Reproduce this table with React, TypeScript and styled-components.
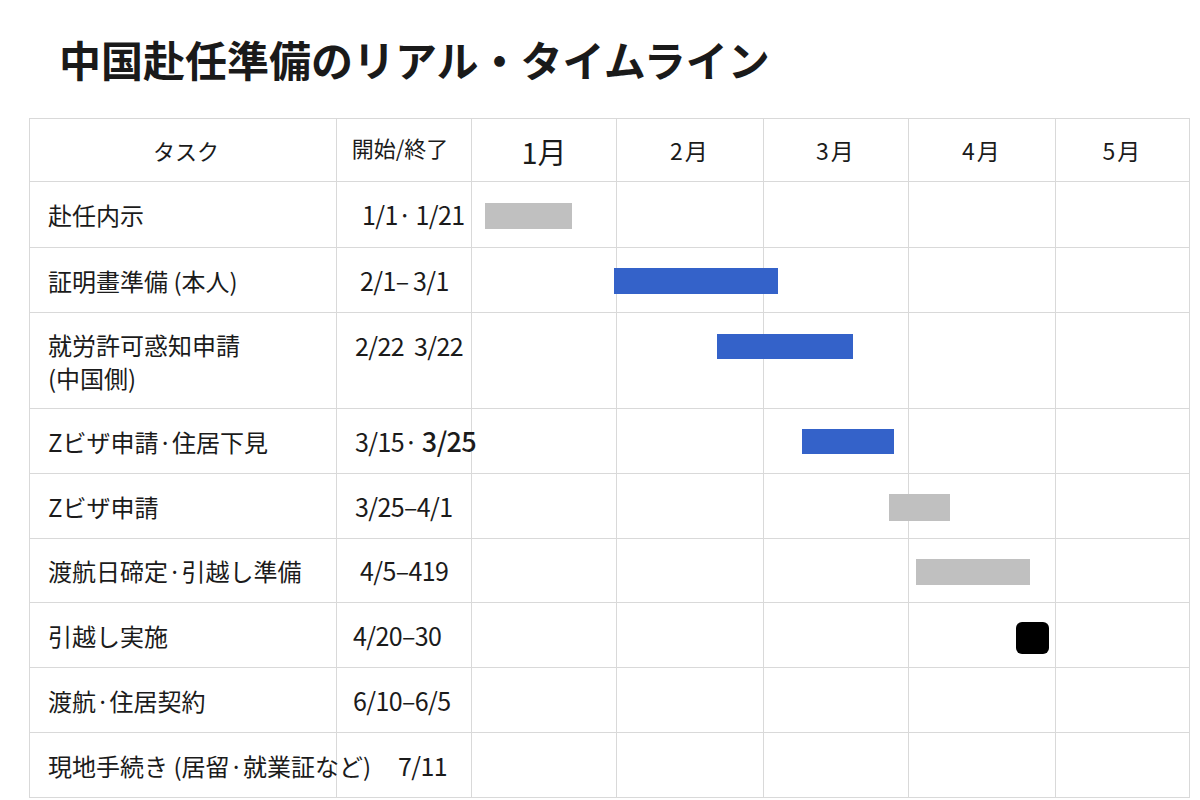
import { createGlobalStyle } from 'styled-components';
import styled from 'styled-components';

type BarType = {
  left: number;
  top: number;
  width: number;
  height: number;
  color: string;
  radius?: number;
};

type TaskType = {
  name: string[];
  date: string;
  dateTail?: string;
  height: number;
  dateTop?: boolean;
  dateIndent?: number;
  bar?: BarType;
};

const BLUE = '#3462c9';
const GRAY = '#c0c0c0';

const months = ['1月', '2月', '3月', '4月', '5月'];

const tasks: TaskType[] = [
  {
    name: ['赴任内示'],
    date: '1/1·\u20091/21',
    height: 66,
    dateIndent: 25,
    bar: { left: 13, top: 21, width: 87, height: 26, color: GRAY },
  },
  {
    name: ['証明畫準備 (本人)'],
    date: '2/1–\u20093/1',
    height: 65,
    dateIndent: 23,
    bar: { left: 142, top: 20, width: 164, height: 26, color: BLUE },
  },
  {
    name: ['就労許可惑知申請', '(中国側)'],
    date: '2/22\u00a0 3/22',
    height: 96,
    dateTop: true,
    bar: { left: 245, top: 21, width: 136, height: 25, color: BLUE },
  },
  {
    name: ['Zビザ申請·住居下見'],
    date: '3/15·\u2009',
    dateTail: '3/25',
    height: 65,
    bar: { left: 330, top: 20, width: 92, height: 25, color: BLUE },
  },
  {
    name: ['Zビザ申請'],
    date: '3/25–4/1',
    height: 65,
    bar: { left: 417, top: 20, width: 61, height: 27, color: GRAY },
  },
  {
    name: ['渡航日碲定·引越し準備'],
    date: '4/5–419',
    height: 64,
    dateIndent: 23,
    bar: { left: 444, top: 20, width: 114, height: 26, color: GRAY },
  },
  {
    name: ['引越し実施'],
    date: '4/20–30',
    height: 65,
    dateIndent: 16,
    bar: { left: 544, top: 19, width: 33, height: 32, color: '#000', radius: 6 },
  },
  {
    name: ['渡航·住居契約'],
    date: '6/10–6/5',
    height: 65,
    dateIndent: 16,
  },
  {
    name: ['現地手続き (居留·就業証など)'],
    date: '7/11',
    height: 65,
    dateIndent: 61,
  },
];

function App() {
  return (
    <>
      <GlobalStyle />
      <Page>
        <Title>中国赴任準備のリアル・タイムライン</Title>
        <Chart>
          <Row $height={63}>
            <HeadCell $col={1}>タスク</HeadCell>
            <HeadCell $col={2} $raise>
              開始/終了
            </HeadCell>
            {months.map((m, i) => (
              <MonthHead key={m} $col={i + 3} $big={i === 0}>
                {m}
              </MonthHead>
            ))}
          </Row>
          {tasks.map((t, index) => (
            <Row key={index} $height={t.height}>
              <TaskCell $col={1}>
                {t.name.map((line) => (
                  <span key={line}>{line}</span>
                ))}
              </TaskCell>
              <DateCell $col={2} $top={t.dateTop} $indent={t.dateIndent ?? 18}>
                <span>
                  {t.date}
                  {t.dateTail && <BigDate>{t.dateTail}</BigDate>}
                </span>
              </DateCell>
              {months.map((m, i) => (
                <MonthCell key={m} $col={i + 3} />
              ))}
              {t.bar && (
                <Bar
                  $color={t.bar.color}
                  $radius={t.bar.radius ?? 0}
                  style={{
                    marginLeft: t.bar.left,
                    marginTop: t.bar.top,
                    width: t.bar.width,
                    height: t.bar.height,
                  }}
                />
              )}
            </Row>
          ))}
        </Chart>
      </Page>
    </>
  );
}

const GlobalStyle = createGlobalStyle`
  html, body {
    margin: 0;
    padding: 0;
    background: #fff;
  }
  body {
    font-family: "Noto Sans CJK JP", "Noto Sans", sans-serif;
    color: #1b1b1b;
  }
`;

const Page = styled.div`
  width: 1200px;
  height: 800px;
  overflow: hidden;
  padding: 0 0 0 29px;
  box-sizing: border-box;
`;

const Title = styled.h1`
  margin: 0;
  padding: 30px 0 0 30px;
  height: 118px;
  box-sizing: border-box;
  font-size: 42px;
  line-height: 58px;
  font-weight: 700;
  color: #1a1a1a;
`;

const Chart = styled.div`
  width: 1161px;
  border-top: 1px solid #d9d9d9;
  border-left: 1px solid #d9d9d9;
  box-sizing: border-box;
`;

const Row = styled.div<{ $height: number }>`
  display: grid;
  grid-template-columns: 307px 135px 145px 147px 145px 147px 134px;
  grid-template-rows: ${({ $height }) => $height - 1}px;
  border-bottom: 1px solid #d9d9d9;
`;

const BaseCell = styled.div<{ $col: number }>`
  grid-row: 1;
  grid-column: ${({ $col }) => $col};
  border-right: 1px solid #d9d9d9;
  display: flex;
  align-items: center;
  white-space: nowrap;
`;

const HeadCell = styled(BaseCell)<{ $raise?: boolean }>`
  justify-content: center;
  font-size: 22px;
  padding-bottom: ${({ $raise }) => ($raise ? '6px' : '0')};
  padding-right: ${({ $raise }) => ($raise ? '8px' : '0')};
  padding-left: ${({ $raise }) => ($raise ? '0' : '6px')};
`;

const MonthHead = styled(BaseCell)<{ $big: boolean }>`
  justify-content: center;
  font-size: ${({ $big }) => ($big ? '29px' : '23px')};
  letter-spacing: ${({ $big }) => ($big ? '0' : '2px')};
  padding-top: ${({ $big }) => ($big ? '2px' : '0')};
`;

const TaskCell = styled(BaseCell)`
  flex-direction: column;
  align-items: flex-start;
  justify-content: center;
  padding-left: 18px;
  font-size: 24px;
  line-height: 33px;
  position: relative;
  z-index: 1;
`;

const DateCell = styled(BaseCell)<{ $top?: boolean; $indent: number }>`
  align-items: ${({ $top }) => ($top ? 'flex-start' : 'center')};
  padding-top: ${({ $top }) => ($top ? '16px' : '0')};
  padding-left: ${({ $indent }) => $indent}px;
  font-size: 25px;
  line-height: 33px;
  letter-spacing: -0.6px;
  position: relative;
  z-index: 1;
`;

const BigDate = styled.span`
  font-size: 27px;
  font-weight: 500;
`;

const MonthCell = styled(BaseCell)``;

const Bar = styled.div<{ $color: string; $radius: number }>`
  grid-row: 1;
  grid-column: 3 / 8;
  align-self: start;
  justify-self: start;
  background: ${({ $color }) => $color};
  border-radius: ${({ $radius }) => $radius}px;
  z-index: 2;
`;

export default App;
